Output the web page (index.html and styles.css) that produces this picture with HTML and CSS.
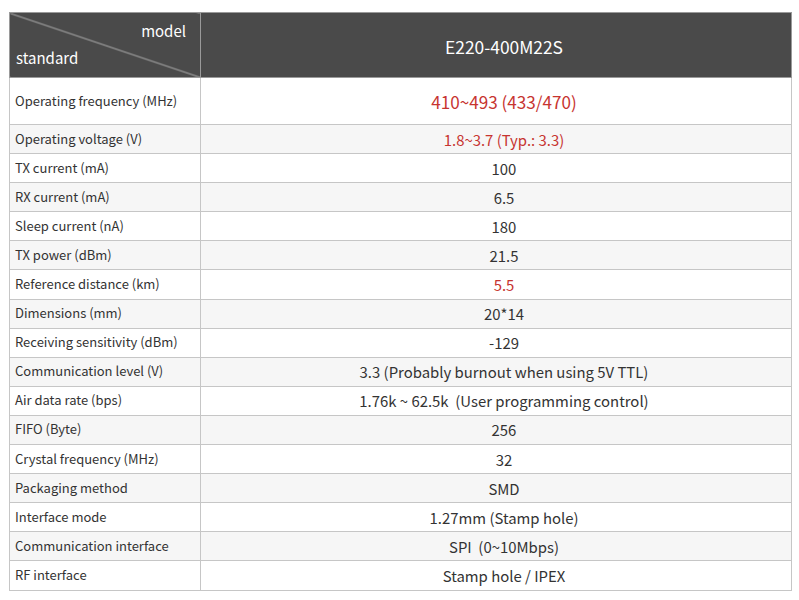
FILE: index.html
```html
<!DOCTYPE html>
<html>
<head>
<meta charset="utf-8">
<link rel="stylesheet" href="styles.css">
</head>
<body>
<table class="spec">
  <thead>
    <tr class="head">
      <th class="corner"><span class="c-model">model</span><span class="c-std">standard</span></th>
      <th class="model">E220-400M22S</th>
    </tr>
  </thead>
  <tbody>
    <tr class="tall"><td class="lbl">Operating frequency (MHz)</td><td class="val red big">410~493 (433/470)</td></tr>
    <tr><td class="lbl">Operating voltage (V)</td><td class="val red">1.8~3.7 (Typ.: 3.3)</td></tr>
    <tr><td class="lbl">TX current (mA)</td><td class="val">100</td></tr>
    <tr><td class="lbl">RX current (mA)</td><td class="val">6.5</td></tr>
    <tr><td class="lbl">Sleep current (nA)</td><td class="val">180</td></tr>
    <tr><td class="lbl">TX power (dBm)</td><td class="val">21.5</td></tr>
    <tr><td class="lbl">Reference distance (km)</td><td class="val red">5.5</td></tr>
    <tr><td class="lbl">Dimensions (mm)</td><td class="val">20*14</td></tr>
    <tr><td class="lbl">Receiving sensitivity (dBm)</td><td class="val">-129</td></tr>
    <tr><td class="lbl">Communication level (V)</td><td class="val">3.3 (Probably burnout when using 5V TTL)</td></tr>
    <tr><td class="lbl">Air data rate (bps)</td><td class="val">1.76k ~ 62.5k&nbsp; (User programming control)</td></tr>
    <tr><td class="lbl">FIFO (Byte)</td><td class="val">256</td></tr>
    <tr><td class="lbl">Crystal frequency (MHz)</td><td class="val">32</td></tr>
    <tr><td class="lbl">Packaging method</td><td class="val">SMD</td></tr>
    <tr><td class="lbl">Interface mode</td><td class="val">1.27mm (Stamp hole)</td></tr>
    <tr><td class="lbl">Communication interface</td><td class="val">SPI&nbsp; (0~10Mbps)</td></tr>
    <tr><td class="lbl">RF interface</td><td class="val">Stamp hole / IPEX</td></tr>
  </tbody>
</table>
</body>
</html>
```
FILE: styles.css
```css
html, body {
  margin: 0;
  padding: 0;
  background: #ffffff;
}
body {
  padding: 12px 7px 0 9px;
  font-family: "Noto Sans CJK SC", "Noto Sans", sans-serif;
  color: #333333;
}
.spec {
  width: 783px;
  border-collapse: collapse;
  table-layout: fixed;
}
.spec th, .spec td {
  border: 1.5px solid #c6c6c6;
  padding: 0;
}
.head {
  height: 65px;
  background: #4a4a4a;
  color: #ffffff;
}
.spec .head th {
  border-color: #9a9a9a;
  font-weight: normal;
}
.spec .corner {
  width: 190px;
  position: relative;
  background: linear-gradient(to top right, transparent calc(50% - 1px), #a8a8a8 50%, transparent calc(50% + 1px));
}
.c-model {
  position: absolute;
  right: 14px;
  top: 7px;
  font-size: 15px;
}
.c-std {
  position: absolute;
  left: 6px;
  bottom: 9px;
  font-size: 15px;
}
.spec .model {
  font-size: 17.4px;
  text-align: center;
  padding: 2px 0 0 16px;
}
tbody tr {
  height: 29.1px;
}
tbody tr:nth-child(even) {
  background: #f6f6f6;
}
tbody tr.tall {
  height: 47px;
}
.spec .lbl {
  font-size: 13px;
  padding-left: 5px;
  line-height: 16px;
  vertical-align: middle;
  padding-bottom: 1px;
}
.spec .val {
  font-size: 14.9px;
  text-align: center;
  line-height: 18px;
  padding: 1px 0 0 16px;
}
.red {
  color: #c73430;
}
.spec .big {
  font-size: 17.1px;
  padding-left: 16px;
}
```
